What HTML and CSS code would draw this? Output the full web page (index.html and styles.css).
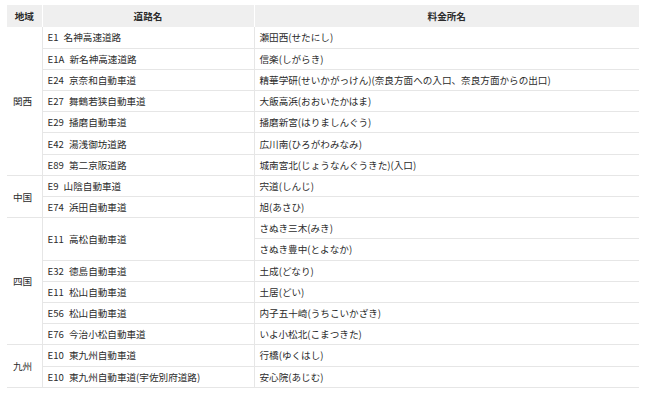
FILE: index.html
```html
<!DOCTYPE html>
<html lang="ja">
<head>
    <meta charset="UTF-8">
    <meta name="viewport" content="width=device-width, initial-scale=1.0">
    <title>料金所一覧</title>
    <link rel="stylesheet" href="styles.css">
</head>
<body>
    <table class="toll-table">
        <thead>
            <tr>
                <th class="col-area">地域</th>
                <th class="col-road">道路名</th>
                <th>料金所名</th>
            </tr>
        </thead>
        <tbody>
            <!-- 関西 -->
            <tr>
                <td class="area" rowspan="7">関西</td>
                <td>E1 名神高速道路</td>
                <td>瀬田西(せたにし)</td>
            </tr>
            <tr><td>E1A 新名神高速道路</td><td>信楽(しがらき)</td></tr>
            <tr><td>E24 京奈和自動車道</td><td>精華学研(せいかがっけん)(奈良方面への入口、奈良方面からの出口)</td></tr>
            <tr><td>E27 舞鶴若狭自動車道</td><td>大飯高浜(おおいたかはま)</td></tr>
            <tr><td>E29 播磨自動車道</td><td>播磨新宮(はりましんぐう)</td></tr>
            <tr><td>E42 湯浅御坊道路</td><td>広川南(ひろがわみなみ)</td></tr>
            <tr><td>E89 第二京阪道路</td><td>城南宮北(じょうなんぐうきた)(入口)</td></tr>

            <!-- 中国 -->
            <tr>
                <td class="area" rowspan="2">中国</td>
                <td>E9 山陰自動車道</td>
                <td>宍道(しんじ)</td>
            </tr>
            <tr><td>E74 浜田自動車道</td><td>旭(あさひ)</td></tr>

            <!-- 四国 -->
            <tr>
                <td class="area" rowspan="6">四国</td>
                <td rowspan="2">E11 高松自動車道</td>
                <td>さぬき三木(みき)</td>
            </tr>
            <tr><td>さぬき豊中(とよなか)</td></tr>
            <tr><td>E32 徳島自動車道</td><td>土成(どなり)</td></tr>
            <tr><td>E11 松山自動車道</td><td>土居(どい)</td></tr>
            <tr><td>E56 松山自動車道</td><td>内子五十崎(うちこいかざき)</td></tr>
            <tr><td>E76 今治小松自動車道</td><td>いよ小松北(こまつきた)</td></tr>

            <!-- 九州 -->
            <tr>
                <td class="area" rowspan="2">九州</td>
                <td>E10 東九州自動車道</td>
                <td>行橋(ゆくはし)</td>
            </tr>
            <tr><td>E10 東九州自動車道(宇佐別府道路)</td><td>安心院(あじむ)</td></tr>
        </tbody>
    </table>
</body>
</html>
```

FILE: styles.css
```css
* {
    margin: 0;
    padding: 0;
    box-sizing: border-box;
}

body {
    font-family: "Noto Sans CJK JP", "Noto Sans", sans-serif;
    font-size: 9.6px;
    color: #2b2b2b;
    background: #fff;
    padding: 5px 11px 0 7px;
}

.toll-table {
    width: 632px;
    border-collapse: collapse;
}

.toll-table th {
    height: 22px;
    background: #efefef;
    font-weight: bold;
    text-align: center;
    border-left: 1px solid #fff;
    padding: 0 5px;
}

.toll-table th:first-child {
    border-left: none;
}

.col-area {
    width: 35px;
}

.col-road {
    width: 212px;
}

.toll-table tbody tr {
    height: 21.2px;
}

.toll-table td {
    padding: 0 5px;
    text-align: left;
    vertical-align: middle;
    border-bottom: 1px solid #e6e6e6;
    border-left: 1px solid #e6e6e6;
    white-space: nowrap;
    word-spacing: 3px;
}

.toll-table td.area {
    border-left: none;
    padding-left: 6px;
}
```
